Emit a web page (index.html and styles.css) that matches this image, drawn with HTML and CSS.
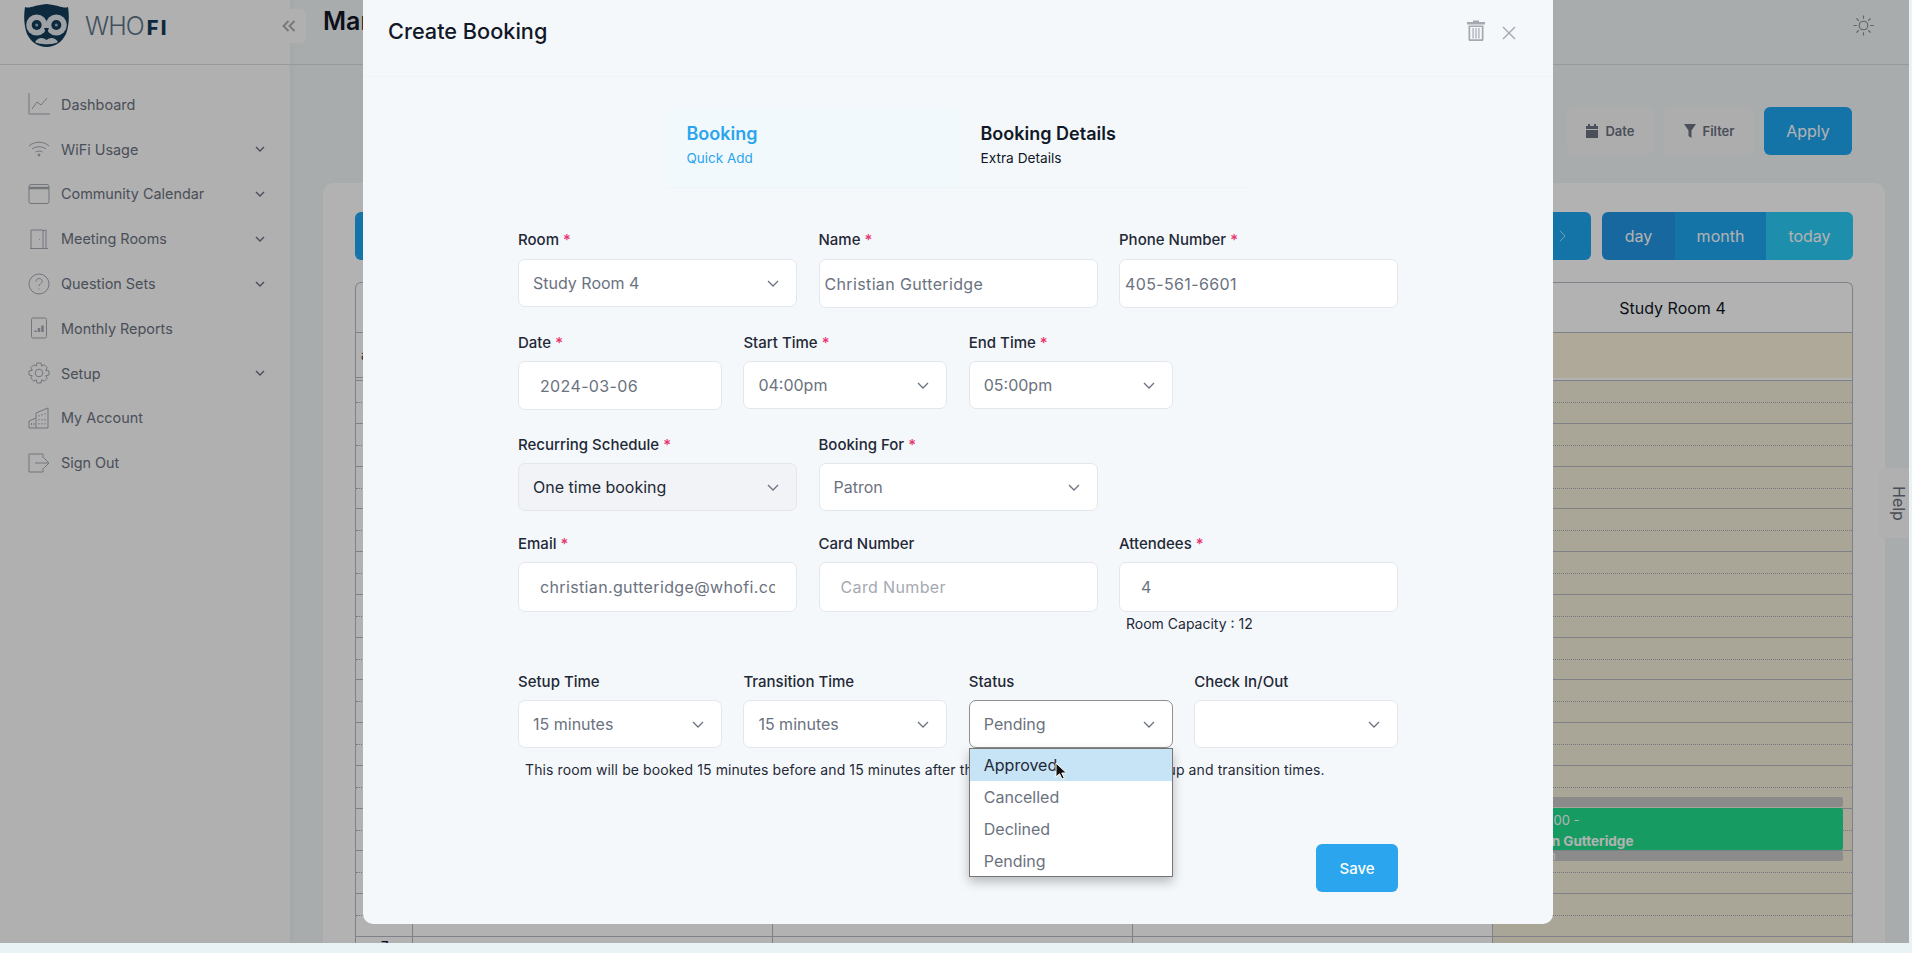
FILE: index.html
```html
<!DOCTYPE html>
<html lang="en">
<head>
<meta charset="utf-8">
<title>Create Booking</title>
<link rel="stylesheet" href="styles.css">
</head>
<body>
<div class="app">
  <aside class="sidebar">
    <div class="brand">
      <svg class="owl" viewBox="0 0 45 43" aria-hidden="true">
        <path d="M1 3 C6 5 10 1 22.500 0 C35 1 39 5 44 3 C45.500 12 45 22 42 30 C38 38 31 43 22.500 43 C14 43 7 38 3 30 C0 22 -0.500 12 1 3 Z" fill="#123b5a"/>
        <circle cx="12.700" cy="21" r="10.500" fill="#e3e8ec"/>
        <circle cx="32.300" cy="21" r="10.500" fill="#e3e8ec"/>
        <circle cx="12.700" cy="21" r="5" fill="#123b5a"/>
        <circle cx="32.300" cy="21" r="5" fill="#123b5a"/>
        <circle cx="12.700" cy="21" r="1.500" fill="#9fb3c1"/>
        <circle cx="32.300" cy="21" r="1.500" fill="#9fb3c1"/>
        <path d="M20 24 L22.500 30 L25 24 Z" fill="#123b5a"/>
        <path d="M11 38 C14 33 19 33 22.500 36 C26 33 31 33 34 38 C30 41 15 41 11 38 Z" fill="#e3e8ec"/>
      </svg>
      <span class="wordmark">WHO<b>FI</b></span>
    </div>
    <nav class="nav">
      <a class="nav-item">
        <svg class="nav-icon" viewBox="0 0 22 22"><path d="M1 0V21H22M4 16L9 9L13 12L19 5"/></svg>
        <span class="nav-label">Dashboard</span>
      </a>
      <a class="nav-item">
        <svg class="nav-icon" viewBox="0 0 22 22"><path d="M1 8C6 3 16 3 21 8M4 11C8 8 14 8 18 11M7.500 14C9.500 12.800 12.500 12.800 14.500 14"/><circle cx="11" cy="17" r="1" class="solid"/></svg>
        <span class="nav-label">WiFi Usage</span>
        <svg class="nav-chevron" viewBox="0 0 10 6"><path d="M1 1L5 5L9 1"/></svg>
      </a>
      <a class="nav-item">
        <svg class="nav-icon" viewBox="0 0 22 22"><rect x="1" y="1.500" width="20" height="19" rx="2"/><path d="M1 5H21" class="thick"/></svg>
        <span class="nav-label">Community Calendar</span>
        <svg class="nav-chevron" viewBox="0 0 10 6"><path d="M1 1L5 5L9 1"/></svg>
      </a>
      <a class="nav-item">
        <svg class="nav-icon" viewBox="0 0 22 22"><path d="M3 20.500V2H15V20.500M15 3L18 2V20.500M2 20.500H20M11.500 11V11.800"/></svg>
        <span class="nav-label">Meeting Rooms</span>
        <svg class="nav-chevron" viewBox="0 0 10 6"><path d="M1 1L5 5L9 1"/></svg>
      </a>
      <a class="nav-item">
        <svg class="nav-icon" viewBox="0 0 22 22"><circle cx="11" cy="11" r="10"/><path d="M8 8.500C8 6.500 9.500 5.500 11 5.500C13 5.500 14.200 6.800 14.200 8.300C14.200 10.500 11 10.500 11 13M11 15.500V16.500"/></svg>
        <span class="nav-label">Question Sets</span>
        <svg class="nav-chevron" viewBox="0 0 10 6"><path d="M1 1L5 5L9 1"/></svg>
      </a>
      <a class="nav-item">
        <svg class="nav-icon" viewBox="0 0 22 22"><rect x="3.500" y="1" width="15" height="20" rx="1.500"/><path d="M7.500 15V13.500M11 15V11M14.500 15V8.500" class="thick"/></svg>
        <span class="nav-label">Monthly Reports</span>
      </a>
      <a class="nav-item">
        <svg class="nav-icon" viewBox="0 0 22 22"><circle cx="11" cy="11" r="3.800"/><path d="M9 1H13L13.600 4L16.200 2.700L19.200 5.700L17.700 8.300L21 9V13L17.800 13.700L19.200 16.300L16.300 19.200L13.700 17.800L13 21H9L8.300 17.800L5.700 19.200L2.800 16.300L4.200 13.700L1 13V9L4.300 8.300L2.800 5.700L5.800 2.700L8.400 4Z" stroke-linejoin="round"/></svg>
        <span class="nav-label">Setup</span>
        <svg class="nav-chevron" viewBox="0 0 10 6"><path d="M1 1L5 5L9 1"/></svg>
      </a>
      <a class="nav-item">
        <svg class="nav-icon" viewBox="0 0 22 22"><path d="M1 21V14L8 11V6L20 1V21ZM8 11V21M11 8V9.500M14 7V8.500M17 6V7.500M11 12V13.500M14 12V13.500M17 12V13.500M11 16V17.500M14 16V17.500M17 16V17.500M3.500 16V18M6 16V18"/></svg>
        <span class="nav-label">My Account</span>
      </a>
      <a class="nav-item">
        <svg class="nav-icon" viewBox="0 0 22 22"><path d="M15 6V2H1V20H15V16M7 11H21M16 6L21 11L16 16"/></svg>
        <span class="nav-label">Sign Out</span>
      </a>
    </nav>
  </aside>
  <button class="collapse" type="button" aria-label="Collapse sidebar">
    <svg class="collapse-icon" viewBox="0 0 14 12"><path d="M6.500 1L1.500 6L6.500 11M12.500 1L7.500 6L12.500 11"/></svg>
  </button>

  <main class="main">
    <header class="topbar">
      <h1 class="page-title">Manage Bookings</h1>
      <svg class="sun" viewBox="0 0 22 22"><circle cx="11" cy="11" r="4.500"/><path d="M11 0.500V4M11 18V21.500M0.500 11H4M18 11H21.500M3.600 3.600L6 6M16 16L18.400 18.400M3.600 18.400L6 16M16 6L18.400 3.600"/></svg>
    </header>
    <div class="filters">
      <button class="ghost-btn date-btn" type="button">
        <svg class="ghost-icon" viewBox="0 0 12 14"><path d="M2 0H4V2H8V0H10V2H12V5H0V2H2ZM0 6H12V14H0Z"/></svg>Date
      </button>
      <button class="ghost-btn" type="button">
        <svg class="ghost-icon" viewBox="0 0 12 14"><path d="M0 0H12L7.500 6.500V14L4.500 12V6.500Z"/></svg>Filter
      </button>
      <button class="apply-btn" type="button">Apply</button>
    </div>
    <section class="card">
      <div class="cal-toolbar">
        <button class="cal-btn cal-add" type="button">Add</button>
        <div class="cal-nav">
          <svg class="cal-next" viewBox="0 0 8 14"><path d="M1 1L7 7L1 13"/></svg>
        </div>
        <div class="cal-views">
          <span class="view view-day">day</span>
          <span class="view view-month">month</span>
          <span class="view view-today">today</span>
        </div>
      </div>
      <div class="calendar">
        <div class="cal-head">
          <div class="head-cell"></div>
          <div class="head-cell">Study Room 1</div>
          <div class="head-cell">Study Room 2</div>
          <div class="head-cell">Study Room 3</div>
          <div class="head-cell">Study Room 4</div>
        </div>
        <div class="cal-allday">
          <div class="allday-cell allday-axis">all-day</div>
          <div class="allday-cell"></div>
          <div class="allday-cell"></div>
          <div class="allday-cell"></div>
          <div class="allday-cell allday-today"></div>
        </div>
        <div class="cal-body">
          <div class="cal-cols">
            <div class="col"></div>
            <div class="col"></div>
            <div class="col"></div>
            <div class="col"></div>
            <div class="col col-today">
              <div class="event-stack">
                <div class="buffer">Setup</div>
                <div class="event">
                  <div class="event-time">4:00 - 5:00 -</div>
                  <div class="event-name">Christian Gutteridge</div>
                </div>
                <div class="buffer">Transition</div>
              </div>
            </div>
          </div>
          <div class="hour"></div><div class="hour"></div><div class="hour"></div><div class="hour"></div>
          <div class="hour"></div><div class="hour"></div><div class="hour"></div><div class="hour"></div>
          <div class="hour"></div><div class="hour"></div><div class="hour"></div><div class="hour"></div>
          <div class="hour"></div>
          <div class="hour"><span class="hour-label">7</span></div>
        </div>
      </div>
    </section>
  </main>

  <div class="help-tab">Help</div>

  <div class="backdrop">
    <div class="modal">
      <div class="modal-head">
        <h2 class="modal-title">Create Booking</h2>
        <svg class="trash" viewBox="0 0 18 21"><path d="M6 2V0.500H12V2H18V4.500H0V2ZM1.500 5.500H16.500V19.500C16.500 20.300 15.800 21 15 21H3C2.200 21 1.500 20.300 1.500 19.500ZM3.200 7V19.300H14.800V7ZM5.500 8H6.700V18.500H5.500ZM8.400 8H9.600V18.500H8.400ZM11.300 8H12.500V18.500H11.300Z"/></svg>
        <svg class="close" viewBox="0 0 14 14"><path d="M1 1L13 13M13 1L1 13"/></svg>
      </div>
      <div class="steps">
        <div class="step step-active">
          <div class="step-title">Booking</div>
          <div class="step-sub">Quick Add</div>
        </div>
        <div class="step">
          <div class="step-title">Booking Details</div>
          <div class="step-sub">Extra Details</div>
        </div>
      </div>
      <form class="form">
        <div class="row row-1">
          <div class="field span-4">
            <div class="label">Room <i>*</i></div>
            <div class="select"><span>Study Room 4</span><svg class="chev" viewBox="0 0 12 7"><path d="M1 1L6 6L11 1"/></svg></div>
          </div>
          <div class="field span-4">
            <div class="label">Name <i>*</i></div>
            <div class="input input-tight">Christian Gutteridge</div>
          </div>
          <div class="field span-4">
            <div class="label">Phone Number <i>*</i></div>
            <div class="input input-tight">405-561-6601</div>
          </div>
        </div>
        <div class="row row-2">
          <div class="field span-3">
            <div class="label">Date <i>*</i></div>
            <div class="input">2024-03-06</div>
          </div>
          <div class="field span-3">
            <div class="label">Start Time <i>*</i></div>
            <div class="select"><span>04:00pm</span><svg class="chev" viewBox="0 0 12 7"><path d="M1 1L6 6L11 1"/></svg></div>
          </div>
          <div class="field span-3">
            <div class="label">End Time <i>*</i></div>
            <div class="select"><span>05:00pm</span><svg class="chev" viewBox="0 0 12 7"><path d="M1 1L6 6L11 1"/></svg></div>
          </div>
        </div>
        <div class="row row-3">
          <div class="field span-4">
            <div class="label">Recurring Schedule <i>*</i></div>
            <div class="select select-disabled"><span>One time booking</span><svg class="chev" viewBox="0 0 12 7"><path d="M1 1L6 6L11 1"/></svg></div>
          </div>
          <div class="field span-4">
            <div class="label">Booking For <i>*</i></div>
            <div class="select"><span>Patron</span><svg class="chev" viewBox="0 0 12 7"><path d="M1 1L6 6L11 1"/></svg></div>
          </div>
        </div>
        <div class="row row-4">
          <div class="field span-4">
            <div class="label">Email <i>*</i></div>
            <div class="input input-tall"><span class="clip">christian.gutteridge@whofi.com</span></div>
          </div>
          <div class="field span-4">
            <div class="label">Card Number</div>
            <div class="input input-tall placeholder">Card Number</div>
          </div>
          <div class="field span-4">
            <div class="label">Attendees <i>*</i></div>
            <div class="input input-tall">4</div>
            <div class="capacity">Room Capacity : 12</div>
          </div>
        </div>
        <div class="row row-5">
          <div class="field span-3">
            <div class="label">Setup Time</div>
            <div class="select"><span>15 minutes</span><svg class="chev" viewBox="0 0 12 7"><path d="M1 1L6 6L11 1"/></svg></div>
          </div>
          <div class="field span-3">
            <div class="label">Transition Time</div>
            <div class="select"><span>15 minutes</span><svg class="chev" viewBox="0 0 12 7"><path d="M1 1L6 6L11 1"/></svg></div>
          </div>
          <div class="field span-3 field-open">
            <div class="label">Status</div>
            <div class="select select-open"><span>Pending</span><svg class="chev" viewBox="0 0 12 7"><path d="M1 1L6 6L11 1"/></svg></div>
            <ul class="menu">
              <li class="menu-item menu-item-hover">Approved</li>
              <li class="menu-item">Cancelled</li>
              <li class="menu-item">Declined</li>
              <li class="menu-item">Pending</li>
            </ul>
            <svg class="cursor" viewBox="0 0 12 18"><path d="M1 1V15L4.500 11.800L7 17L9.300 16L6.800 11H11.500Z"/></svg>
          </div>
          <div class="field span-3">
            <div class="label">Check In/Out</div>
            <div class="select"><span></span><svg class="chev" viewBox="0 0 12 7"><path d="M1 1L6 6L11 1"/></svg></div>
          </div>
        </div>
        <p class="hint">This room will be booked 15 minutes before and 15 minutes after the booking to allow for the setup and transition times.</p>
        <div class="form-foot">
          <button class="save" type="button">Save</button>
        </div>
      </form>
    </div>
  </div>
</div>
</body>
</html>
```
FILE: styles.css
```css
* { box-sizing: border-box; }
html, body { margin: 0; height: 100%; overflow: hidden; }
body { background: #e9f3f5; font-family: Inter, "Noto Sans", sans-serif; color: #111827; }
button { font-family: inherit; border: 0; }

.app { position: relative; width: 1909px; height: 943px; overflow: hidden; display: flex; background: #f2f6f6; }

/* sidebar */
.sidebar { width: 290px; flex: none; background: #fcfcfc; box-shadow: 2px 0 6px rgba(0,0,0,.03); }
.brand { height: 65px; border-bottom: 1px solid #dcdcdc; display: flex; align-items: flex-start; padding: 4px 0 0 24px; }
.owl { width: 45px; height: 43px; flex: none; }
.wordmark { margin: 7px 0 0 16px; font-size: 25px; line-height: 30px; font-weight: 300; color: #5e7487; letter-spacing: -1px; white-space: nowrap; }
.wordmark b { font-weight: 800; color: #153c5a; margin-left: 3px; letter-spacing: 2.500px; font-size: 20px; }
.nav { padding-top: 17px; }
.nav-item { height: 44.800px; display: flex; align-items: center; padding-left: 28px; }
.nav-icon { width: 22px; height: 22px; flex: none; fill: none; stroke: #a6a9b2; stroke-width: 1; overflow: visible; }
.nav-icon .solid { fill: #a6a9b2; }
.nav-icon .thick { stroke-width: 2.500; }
.nav-label { margin-left: 11px; flex: 1; font-size: 14.400px; font-weight: 400; color: #6b7280; }
.nav-chevron { width: 10px; height: 6px; margin-right: 25px; fill: none; stroke: #6b7280; stroke-width: 1.400; }
.collapse { position: absolute; left: 272px; top: 9px; width: 34px; height: 34px; padding: 0; background: #fdfdfd; border-radius: 6px; display: flex; align-items: center; justify-content: center; }
.collapse-icon { width: 14px; height: 12px; fill: none; stroke: #a4a8ae; stroke-width: 1.800; }

/* main */
.main { flex: 1; min-width: 0; }
.topbar { height: 65px; border-bottom: 1px solid #dcdcdc; display: flex; justify-content: space-between; padding: 0 35px 0 33px; }
.page-title { margin: 5px 0 0; font-size: 25px; line-height: 32px; font-weight: 600; color: #111827; }
.sun { width: 21px; height: 21px; margin-top: 15px; fill: none; stroke: #8b8f96; stroke-width: 1.200; }
.filters { display: flex; justify-content: flex-end; gap: 10px; margin-top: 42px; padding-right: 57px; }
.ghost-btn { height: 48px; width: 90px; background: #f8f8f8; border-radius: 6px; display: flex; align-items: center; justify-content: center; gap: 7px; font-size: 13px; font-weight: 600; color: #6b7280; }
.date-btn { width: 87px; }
.ghost-icon { width: 12px; height: 14px; fill: #6b7280; }
.apply-btn { height: 48px; width: 88px; background: #1da6f0; border-radius: 6px; color: #fff; font-size: 16px; }
.card { margin: 28px 24px 0 33px; height: 800px; padding: 29px 32px 0; background: #fff; border-radius: 10px; }
.cal-toolbar { display: flex; height: 48px; }
.cal-btn { width: 120px; background: #1da6f0; border-radius: 6px; color: #fff; font-size: 16px; }
.cal-nav { margin-left: auto; width: 60px; height: 48px; background: #1da6f0; border-radius: 0 6px 6px 0; display: flex; align-items: center; padding-left: 28px; }
.cal-next { width: 7px; height: 14px; fill: none; stroke: #cfe7f5; stroke-width: 1; }
.cal-views { margin-left: 11px; display: flex; border-radius: 6px; overflow: hidden; color: #fff; font-size: 16px; }
.view { height: 48px; display: flex; align-items: center; justify-content: center; }
.view-day { width: 73px; background: #2196e3; }
.view-month { width: 91px; background: #1da6f0; }
.view-today { width: 87px; background: #2cccf8; }
.calendar { margin-top: 22px; border: 1px solid #b8b8c4; border-bottom: 0; border-radius: 6px 6px 0 0; }
.cal-head, .cal-allday, .cal-cols { display: grid; grid-template-columns: 56px repeat(4, 1fr); }
.cal-head { height: 50px; border-bottom: 1px solid #b8b8c4; }
.head-cell { display: flex; align-items: center; justify-content: center; font-size: 16px; font-weight: 400; color: #111827; border-left: 1px solid #b8b8c4; }
.head-cell:first-child, .allday-cell:first-child { border-left: 0; }
.cal-allday { height: 45px; border-bottom: 1px solid #b8b8c4; }
.allday-cell { border-left: 1px solid #b8b8c4; }
.allday-axis { font-size: 13px; line-height: 45px; padding-left: 5px; color: #374151; }
.allday-today { background: #f9f3db; }
.cal-body { position: relative; margin-top: 2px; border-top: 1px solid #b8b8c4; }
.cal-cols { position: absolute; inset: 0; }
.col { position: relative; border-left: 1px solid #b8b8c4; }
.col:first-child { border-left: 0; }
.col-today { background: #f3eeda; }
.event-stack { position: absolute; z-index: 2; top: 416px; left: 3px; right: 9px; display: flex; flex-direction: column; gap: 1px; }
.buffer { height: 10px; background: #c8c8c8; border-radius: 2px; overflow: hidden; color: #fff; font-size: 12px; line-height: 10px; padding-left: 4px; }
.event { height: 42px; background: #20e08e; border-radius: 2px; color: #fff; font-size: 13.500px; line-height: 21px; padding: 2px 0 0 4px; white-space: nowrap; }
.event-time { font-size: 13px; }
.event-name { font-weight: 700; }
.hour { position: relative; height: 42.750px; border-bottom: 1px solid #b8b8c4; }
.hour::before { content: ""; position: absolute; left: 0; right: 0; top: 21px; border-top: 1px dotted #a8a8b4; }
.hour-label { position: absolute; left: 25px; top: 1px; font-size: 13px; font-weight: 500; color: #111827; }

.help-tab { position: absolute; right: 0; top: 468px; width: 31px; height: 70px; padding-left: 10px; background: #fcfcfc; border-radius: 8px 0 0 8px; display: flex; align-items: center; writing-mode: vertical-rl; justify-content: center; font-size: 16px; line-height: 22px; color: #6b7280; }

/* modal */
.backdrop { position: absolute; inset: 0; z-index: 10; background: rgba(0,0,0,.3); }
.modal { position: absolute; left: 363px; top: 0; width: 1190px; height: 924px; background: #f5f8fb; border-radius: 0 0 10px 10px; }
.modal-head { height: 77px; border-bottom: 1px solid #f0f3f7; display: flex; align-items: flex-start; padding: 0 37px 0 25px; }
.modal-title { flex: 1; margin: 17px 0 0; font-size: 21.700px; line-height: 28px; font-weight: 500; color: #111827; }
.trash { width: 18px; height: 21px; margin-top: 20px; fill: #a4a8b1; }
.close { width: 14px; height: 14px; margin: 26px 0 0 17px; fill: none; stroke: #a4a8b1; stroke-width: 1.400; }
.steps { width: 583px; height: 80px; margin: 31px auto 0; display: flex; border-bottom: 1px solid #f0f3f7; }
.step { width: 291px; padding: 14px 0 0 23px; }
.step-active { background: #f2f9fc; color: #2aa5ee; padding-left: 20px; }
.step-title { font-size: 18px; line-height: 24px; font-weight: 600; }
.step-sub { font-size: 13.700px; line-height: 24px; }
.step-active .step-sub { font-size: 13.500px; }

.form { padding: 0 155px; }
.row { display: grid; grid-template-columns: repeat(12, 1fr); column-gap: 21.500px; align-items: start; }
.row-1 { margin-top: 42px; }
.row-2 { margin-top: 24px; }
.row-3 { margin-top: 24px; }
.row-4 { margin-top: 22px; }
.row-5 { margin-top: 37px; }
.span-3 { grid-column: span 3; }
.span-4 { grid-column: span 4; }
.field { position: relative; min-width: 0; }
.label { height: 20px; margin-bottom: 9px; font-size: 15px; line-height: 22px; font-weight: 500; color: #1f2937; }
.row-1 .label { line-height: 20px; }
.label i { font-style: normal; color: #e8336f; }
.select, .input { background: #fff; border: 1px solid #e3e6ec; border-radius: 7px; font-size: 16px; color: #6b7280; display: flex; align-items: center; }
.select { height: 48px; padding: 0 17px 0 14px; justify-content: space-between; }
.input { height: 49px; padding: 0 21px; letter-spacing: .36px; }
.input-tight { padding: 0 5px; }
.input-tall { height: 50px; }
.clip { overflow: hidden; white-space: nowrap; }
.placeholder { color: #a5a9b2; }
.select-disabled { background: #f1f3f6; color: #1f2937; }
.select-open { border-color: #8f8f8f; }
.chev { width: 12px; height: 7px; flex: none; fill: none; stroke: #6b7280; stroke-width: 1.300; }
.capacity { margin-top: 2px; padding-left: 7px; font-size: 14px; line-height: 20px; color: #1f2937; }
.menu { position: absolute; z-index: 3; left: 0; right: 0; top: 77px; margin: 0; padding: 0; list-style: none; height: 129px; background: #fff; border: 1px solid #767676; box-shadow: 0 5px 10px rgba(0,0,0,.25); }
.menu-item { height: 32px; padding-left: 14px; font-size: 16px; line-height: 32px; color: #6b7280; }
.menu-item-hover { background: #c6e4f6; color: #1f2937; }
.cursor { position: absolute; z-index: 4; left: 86px; top: 91px; width: 12px; height: 18px; fill: #111; stroke: #fff; stroke-width: 1; }
.hint { margin: 12px 0 0; padding-left: 7px; font-size: 14px; line-height: 20px; letter-spacing: .1px; color: #1f2937; }
.form-foot { display: flex; justify-content: flex-end; margin-top: 64px; }
.save { width: 82px; height: 48px; background: #2aa5ee; border-radius: 6px; color: #fff; font-size: 15px; font-weight: 500; }
```
